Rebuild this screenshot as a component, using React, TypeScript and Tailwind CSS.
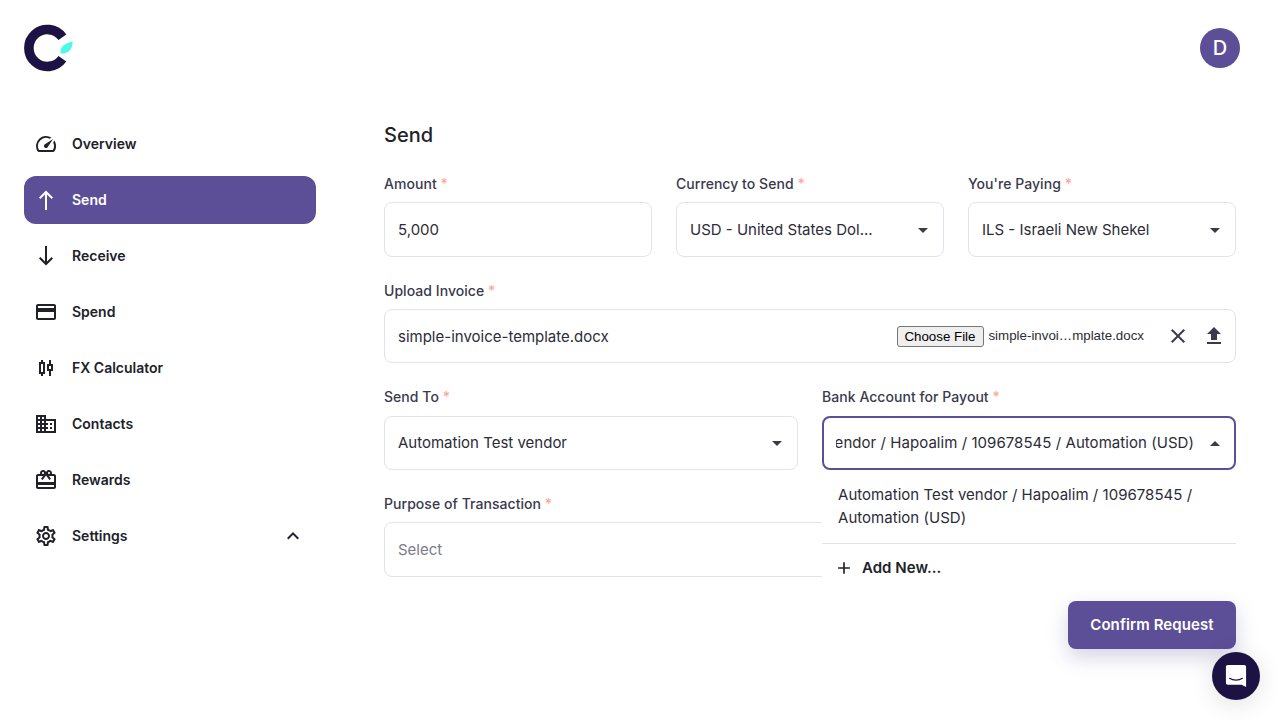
import { ReactNode } from 'react';

const ICONS = {
  speed:
    'M20.38 8.57l-1.23 1.85a8 8 0 0 1-.22 7.58H5.07A8 8 0 0 1 15.58 6.85l1.85-1.23A10 10 0 0 0 3.35 19a2 2 0 0 0 1.72 1h13.85a2 2 0 0 0 1.74-1 10 10 0 0 0-.27-10.44zm-9.79 6.84a2 2 0 0 0 2.83 0l5.66-8.49-8.49 5.66a2 2 0 0 0 0 2.83z',
  up: 'M11 22V6.4L6.4 11 5 9.6 12 2.6 19 9.6 17.6 11 13 6.4V22z',
  down: 'M11 2V17.6L6.4 13 5 14.4 12 21.4 19 14.4 17.6 13 13 17.6V2z',
  card: 'M20 4H4c-1.11 0-1.99.89-1.99 2L2 18c0 1.11.89 2 2 2h16c1.11 0 2-.89 2-2V6c0-1.11-.89-2-2-2zm0 14H4v-6h16v6zm0-10H4V6h16v2z',
  candle:
    'M9 4H7v2H5v12h2v2h2v-2h2V6H9V4zm0 12H7V8h2v8zm10-8h-2V4h-2v4h-2v7h2v5h2v-5h2V8zm-2 5h-2v-3h2v3z',
  domain:
    'M12 7V3H2v18h20V7H12zM6 19H4v-2h2v2zm0-4H4v-2h2v2zm0-4H4V9h2v2zm0-4H4V5h2v2zm4 12H8v-2h2v2zm0-4H8v-2h2v2zm0-4H8V9h2v2zm0-4H8V5h2v2zm10 12h-8v-2h2v-2h-2v-2h2v-2h-2V9h8v10zm-2-8h-2v2h2v-2zm0 4h-2v2h2v-2z',
  gift: 'M20 6h-2.18c.11-.31.18-.65.18-1 0-1.66-1.34-3-3-3-1.05 0-1.96.54-2.5 1.35l-.5.67-.5-.68C10.96 2.54 10.05 2 9 2 7.34 2 6 3.34 6 5c0 .35.07.69.18 1H4c-1.11 0-1.99.89-1.99 2L2 19c0 1.11.89 2 2 2h16c1.11 0 2-.89 2-2V8c0-1.11-.89-2-2-2zm-5-2c.55 0 1 .45 1 1s-.45 1-1 1-1-.45-1-1 .45-1 1-1zM9 4c.55 0 1 .45 1 1s-.45 1-1 1-1-.45-1-1 .45-1 1-1zm11 15H4v-2h16v2zm0-5H4V8h5.08L7 10.83 8.62 12 11 8.76l1-1.36 1 1.36L15.38 12 17 10.83 14.92 8H20v6z',
  settings:
    'M19.43 12.98c.04-.32.07-.64.07-.98 0-.34-.03-.66-.07-.98l2.11-1.65c.19-.15.24-.42.12-.64l-2-3.46c-.09-.16-.26-.25-.44-.25-.06 0-.12.01-.17.03l-2.49 1c-.52-.4-1.08-.73-1.69-.98l-.38-2.65C14.46 2.18 14.25 2 14 2h-4c-.25 0-.46.18-.49.42l-.38 2.65c-.61.25-1.17.59-1.69.98l-2.49-1c-.06-.02-.12-.03-.18-.03-.17 0-.34.09-.43.25l-2 3.46c-.13.22-.07.49.12.64l2.11 1.65c-.04.32-.07.65-.07.98 0 .33.03.66.07.98l-2.11 1.65c-.19.15-.24.42-.12.64l2 3.46c.09.16.26.25.44.25.06 0 .12-.01.17-.03l2.49-1c.52.4 1.08.73 1.69.98l.38 2.65c.03.24.24.42.49.42h4c.25 0 .46-.18.49-.42l.38-2.65c.61-.25 1.17-.59 1.69-.98l2.49 1c.06.02.12.03.18.03.17 0 .34-.09.43-.25l2-3.46c.12-.22.07-.49-.12-.64l-2.11-1.65zm-1.98-1.71c.04.31.05.52.05.73 0 .21-.02.43-.05.73l-.14 1.13.89.7 1.08.84-.7 1.21-1.27-.51-1.04-.42-.9.68c-.43.32-.84.56-1.25.73l-1.06.43-.16 1.13-.2 1.35h-1.4l-.19-1.35-.16-1.13-1.06-.43c-.43-.18-.83-.41-1.23-.71l-.91-.7-1.06.43-1.27.51-.7-1.21 1.08-.84.89-.7-.14-1.13c-.03-.31-.05-.54-.05-.74s.02-.43.05-.73l.14-1.13-.89-.7-1.08-.84.7-1.21 1.27.51 1.04.42.9-.68c.43-.32.84-.56 1.25-.73l1.06-.43.16-1.13.2-1.35h1.39l.19 1.35.16 1.13 1.06.43c.43.18.83.41 1.23.71l.91.7 1.06-.43 1.27-.51.7 1.21-1.07.85-.89.7.14 1.13zM12 8c-2.21 0-4 1.79-4 4s1.79 4 4 4 4-1.79 4-4-1.79-4-4-4zm0 6c-1.1 0-2-.9-2-2s.9-2 2-2 2 .9 2 2-.9 2-2 2z',
  upload: 'M9 16h6v-6h4l-7-7-7 7h4zm-4 2h14v2H5z',
  close:
    'M19 6.41 17.59 5 12 10.59 6.41 5 5 6.41 10.59 12 5 17.59 6.41 19 12 13.41 17.59 19 19 17.59 13.41 12z',
  plus: 'M19 13h-6v6h-2v-6H5v-2h6V5h2v6h6v2z',
  chevron: 'M12 8l-6 6 1.41 1.41L12 10.83l4.59 4.58L18 14z',
};

function Icon({ d, className }: { d: string; className?: string }) {
  return (
    <svg viewBox="0 0 24 24" fill="currentColor" className={className}>
      <path d={d} />
    </svg>
  );
}

const NAV = [
  { label: 'Overview', icon: ICONS.speed },
  { label: 'Send', icon: ICONS.up, active: true },
  { label: 'Receive', icon: ICONS.down },
  { label: 'Spend', icon: ICONS.card },
  { label: 'FX Calculator', icon: ICONS.candle },
  { label: 'Contacts', icon: ICONS.domain },
  { label: 'Rewards', icon: ICONS.gift },
  { label: 'Settings', icon: ICONS.settings, chevron: true },
];

function Logo() {
  return (
    <svg viewBox="0 0 48 48" className="w-12 h-12 overflow-visible">
      <path d="M38.4 13.2 A18.5 18.5 0 1 0 38.4 34.8" fill="none" stroke="#1c1244" strokeWidth="9.6" />
      <path d="M36.6 29.6 C36 24 38 20 48.6 17.4 C48.6 24 46 29.6 36.6 29.6 Z" fill="#4ff7e8" />
    </svg>
  );
}

function Field({
  label,
  children,
  className = '',
  labelGap = 'mb-[9px]',
}: {
  label: string;
  children: ReactNode;
  className?: string;
  labelGap?: string;
}) {
  return (
    <div className={`relative ${className}`}>
      <p className={`text-sm font-medium leading-[18px] tracking-[0.05px] text-[#3a3a4c] ${labelGap}`}>
        {label} <span className="text-[#ffa899]">*</span>
      </p>
      {children}
    </div>
  );
}

// focused fields get the purple 2px border instead of the grey one
function Box({
  children,
  focused,
  className = '',
}: {
  children: ReactNode;
  focused?: boolean;
  className?: string;
}) {
  return (
    <div
      className={`flex items-center pt-px rounded-lg text-[15px] text-[#2c2c38] ${
        focused ? 'border-2 border-[#5c4f98] pl-3 pr-[14px]' : 'border border-[#e2e2ea] pl-[13px]'
      } ${className}`}
    >
      {children}
    </div>
  );
}

function Caret({ up }: { up?: boolean }) {
  return (
    <span
      className={`shrink-0 w-0 h-0 border-x-[5px] border-x-transparent ${
        up ? 'border-b-[5px] border-b-[#3a3a4c]' : 'border-t-[5px] border-t-[#3a3a4c]'
      }`}
    />
  );
}

export default function App() {
  return (
    <div className="relative h-[720px] overflow-hidden bg-white font-['Inter',sans-serif]">
      <header className="flex items-start justify-between pt-6 pl-6 pr-10 h-[120px]">
        <Logo />
        <div className="mt-1 w-10 h-10 rounded-full bg-[#5c4f98] flex items-center justify-center text-white text-xl font-medium">
          D
        </div>
      </header>

      <div className="flex">
        <aside className="w-[340px] shrink-0 px-6">
          <nav className="flex flex-col gap-2">
            {NAV.map((item) => (
              <div
                key={item.label}
                className={`flex items-center h-12 pl-[10px] pr-[11px] rounded-xl text-sm font-semibold ${
                  item.active ? 'bg-[#5c4f98] text-white' : 'text-[#212129]'
                }`}
              >
                <Icon d={item.icon} className="w-6 h-6 mr-[14px]" />
                <span className="flex-1">{item.label}</span>
                {item.chevron && <Icon d={ICONS.chevron} className="w-6 h-6" />}
              </div>
            ))}
          </nav>
        </aside>

        <main className="w-[852px] ml-[44px]">
          <h1 className="text-xl font-medium leading-[30px] text-[#212129]">Send</h1>

          <div className="grid grid-cols-3 gap-x-6 mt-[25px]">
            <Field label="Amount">
              <Box className="h-[55px] pr-[13px]">5,000</Box>
            </Field>
            <Field label="Currency to Send">
              <Box className="h-[55px] justify-between pr-[15px]">
                USD - United States Dol...
                <Caret />
              </Box>
            </Field>
            <Field label="You're Paying">
              <Box className="h-[55px] justify-between pr-[15px]">
                ILS - Israeli New Shekel
                <Caret />
              </Box>
            </Field>
          </div>

          <Field label="Upload Invoice" className="mt-[25px]">
            <Box className="h-[54px] justify-between pr-[9px]">
              <span className="mt-px">simple-invoice-template.docx</span>
              <div className="flex items-center -mt-px">
                <button className="h-[21px] w-[87px] pr-[2px] rounded-[3px] border border-[#767676] bg-[#efefef] font-['Liberation_Sans',sans-serif] text-[13.33px] text-black">
                  Choose File
                </button>
                <span className="ml-1 font-['Liberation_Sans',sans-serif] text-[13.33px] text-[#2c2c38]">
                  simple-invoi…mplate.docx
                </span>
                <Icon d={ICONS.close} className="ml-[22px] w-6 h-6 text-[#3a3a4c]" />
                <Icon d={ICONS.upload} className="ml-3 w-6 h-6 text-[#3a3a4c]" />
              </div>
            </Box>
          </Field>

          <div className="grid grid-cols-2 gap-x-6 mt-[25px]">
            <Field label="Send To" labelGap="mb-[10px]">
              <Box className="h-[54px] justify-between pr-[15px]">
                Automation Test vendor
                <Caret />
              </Box>
            </Field>
            <Field label="Bank Account for Payout" labelGap="mb-[10px]" className="z-10">
              <Box focused className="h-[54px]">
                <div className="flex-1 min-w-0 flex justify-end overflow-hidden whitespace-nowrap mr-4 tracking-[0.05px]">
                  Automation Test vendor / Hapoalim / 109678545 / Automation (USD)
                </div>
                <Caret up />
              </Box>
              <div className="absolute top-full left-0 right-0 bg-white text-[15px] tracking-[0.03px] text-[#2c2c38]">
                <p className="px-4 pt-[13px] pb-[14px] leading-[23px]">
                  Automation Test vendor / Hapoalim / 109678545 / Automation (USD)
                </p>
                <div className="flex items-center h-[48px] pt-px px-3 border-t border-[#e2e2ea] font-semibold text-[#212129]">
                  <Icon d={ICONS.plus} className="w-5 h-5 mr-2" />
                  Add New...
                </div>
              </div>
            </Field>
          </div>

          <Field label="Purpose of Transaction" className="mt-[25px]">
            <Box className="h-[55px] text-[#7c7c88]">Select</Box>
          </Field>

          <div className="flex justify-end mt-6">
            <button className="h-12 w-[168px] rounded-lg bg-[#5c4f98] text-white text-[15px] tracking-[0.1px] font-semibold shadow-[0_8px_20px_rgba(92,79,152,0.25)]">
              Confirm Request
            </button>
          </div>
        </main>
      </div>

      <div className="absolute right-5 bottom-5 w-12 h-12 rounded-full bg-[#1c1244] flex items-center justify-center shadow-[0_4px_24px_rgba(0,0,0,0.12)]">
        <svg viewBox="0 0 24 26" className="w-[22px] h-6">
          <path d="M3 1h18a2 2 0 0 1 2 2v22l-5-2.4H3a2 2 0 0 1-2-2V3a2 2 0 0 1 2-2z" fill="#fff" />
          <path d="M5 15.5c4 2.6 10 2.6 14 0" fill="none" stroke="#1c1244" strokeWidth="1.3" strokeLinecap="round" />
        </svg>
      </div>
    </div>
  );
}
